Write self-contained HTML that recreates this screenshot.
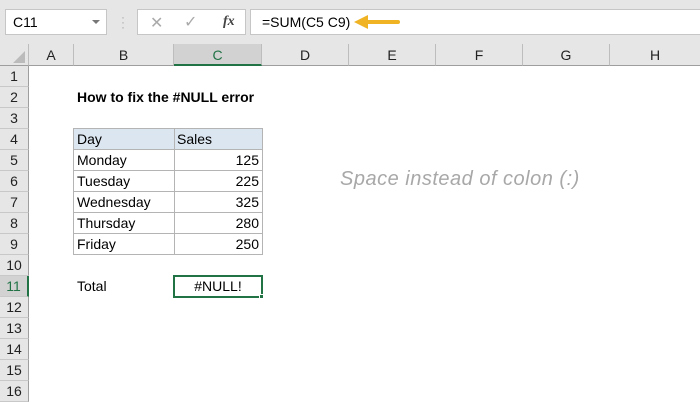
<!DOCTYPE html><html><head><style>
*{margin:0;padding:0;box-sizing:border-box}
body{width:700px;height:400px;overflow:hidden;background:#fff;font-family:"Liberation Sans",sans-serif;position:relative;font-size:14px;color:#000}
.a{position:absolute}
.ch{position:absolute;top:44px;height:22px;border-right:1px solid #bdbdbd;border-bottom:1px solid #9e9e9e;background:#e6e6e6;text-align:center;line-height:22px;font-size:14px;color:#222}
.rh{position:absolute;left:0;width:29px;height:21px;border-bottom:1px solid #c8c8c8;border-right:1px solid #9e9e9e;background:#e6e6e6;text-align:center;line-height:21px;font-size:14px;color:#222}
.c{position:absolute;height:21px;line-height:21px;font-size:14px;padding:0 3px;white-space:nowrap}
</style></head><body>
<div class="a" style="left:0;top:0;width:700px;height:44px;background:#e6e6e6"></div>
<div class="a" style="left:5px;top:9px;width:102px;height:26px;background:#fff;border:1px solid #c6c6c6;line-height:24px;padding-left:7px;font-size:14px">C11</div>
<div class="a" style="left:92px;top:20px;width:0;height:0;border-left:4px solid transparent;border-right:4px solid transparent;border-top:4px solid #777"></div>
<div class="a" style="left:121px;top:15px;color:#aaa;font-size:12px;line-height:5px">·<br>·<br>·</div>
<div class="a" style="left:137px;top:9px;width:109px;height:26px;background:#fff;border:1px solid #c6c6c6"></div>
<div class="a" style="left:150px;top:13px;color:#aaa;font-size:16px">✕</div>
<div class="a" style="left:184px;top:12px;color:#aaa;font-size:16px">✓</div>
<div class="a" style="left:223px;top:14px;color:#444;font-size:14px;font-style:italic;font-family:'Liberation Serif',serif;font-weight:bold">fx</div>
<div class="a" style="left:250px;top:9px;width:450px;height:26px;background:#fff;border:1px solid #c6c6c6;border-right:none;line-height:24px;padding-left:11px;font-size:14px">=SUM(C5 C9)</div>
<svg class="a" style="left:352px;top:12px" width="50" height="20"><path d="M10 10H46" stroke="#f0b323" stroke-width="4" stroke-linecap="round"/><path d="M2 10L16 3V17Z" fill="#f0b323"/></svg>
<div class="ch" style="left:0;width:29px"></div>
<div class="a" style="left:13px;top:51px;width:0;height:0;border-left:12px solid transparent;border-bottom:12px solid #bbb"></div>
<div class="ch" style="left:29px;width:45px">A</div>
<div class="ch" style="left:74px;width:100px">B</div>
<div class="ch" style="left:174px;width:88px;background:#d2d2d2;border-bottom:2px solid #217346;color:#217346">C</div>
<div class="ch" style="left:262px;width:87px">D</div>
<div class="ch" style="left:349px;width:87px">E</div>
<div class="ch" style="left:436px;width:87px">F</div>
<div class="ch" style="left:523px;width:87px">G</div>
<div class="ch" style="left:610px;width:90px;border-right:none">H</div>
<div class="rh" style="top:66px">1</div><div class="rh" style="top:87px">2</div><div class="rh" style="top:108px">3</div><div class="rh" style="top:129px">4</div><div class="rh" style="top:150px">5</div><div class="rh" style="top:171px">6</div><div class="rh" style="top:192px">7</div><div class="rh" style="top:213px">8</div><div class="rh" style="top:234px">9</div><div class="rh" style="top:255px">10</div>
<div class="rh" style="top:276px;background:#d2d2d2;color:#217346;border-right:2px solid #217346">11</div>
<div class="rh" style="top:297px">12</div><div class="rh" style="top:318px">13</div><div class="rh" style="top:339px">14</div><div class="rh" style="top:360px">15</div><div class="rh" style="top:381px">16</div>
<div class="c" style="left:74px;top:87px;font-weight:bold">How to fix the #NULL error</div>
<div class="a" style="left:73px;top:128px;width:190px;height:127px;border:1px solid #b4b4b4"></div>
<div class="a" style="left:74px;top:129px;width:188px;height:21px;background:#dce6f1"></div>
<div class="a" style="left:174px;top:129px;width:1px;height:125px;background:#b4b4b4"></div>
<div class="a" style="left:74px;top:149px;width:188px;height:1px;background:#b4b4b4"></div>
<div class="a" style="left:74px;top:170px;width:188px;height:1px;background:#b4b4b4"></div>
<div class="a" style="left:74px;top:191px;width:188px;height:1px;background:#b4b4b4"></div>
<div class="a" style="left:74px;top:212px;width:188px;height:1px;background:#b4b4b4"></div>
<div class="a" style="left:74px;top:233px;width:188px;height:1px;background:#b4b4b4"></div>
<div class="c" style="left:74px;top:129px">Day</div><div class="c" style="left:174px;top:129px">Sales</div>
<div class="c" style="left:74px;top:150px">Monday</div><div class="c" style="left:174px;top:150px;width:88px;text-align:right">125</div>
<div class="c" style="left:74px;top:171px">Tuesday</div><div class="c" style="left:174px;top:171px;width:88px;text-align:right">225</div>
<div class="c" style="left:74px;top:192px">Wednesday</div><div class="c" style="left:174px;top:192px;width:88px;text-align:right">325</div>
<div class="c" style="left:74px;top:213px">Thursday</div><div class="c" style="left:174px;top:213px;width:88px;text-align:right">280</div>
<div class="c" style="left:74px;top:234px">Friday</div><div class="c" style="left:174px;top:234px;width:88px;text-align:right">250</div>
<div class="c" style="left:74px;top:276px">Total</div>
<div class="a" style="left:173px;top:275px;width:90px;height:23px;border:2px solid #217346;text-align:center;line-height:19px;font-size:14px">#NULL!</div>
<div class="a" style="left:259px;top:294px;width:5px;height:5px;background:#217346;border:1px solid #fff"></div>
<div class="a" style="left:340px;top:168px;font-size:20px;color:#a8a8a8;font-style:italic;letter-spacing:0.5px">Space instead of colon (:)</div>
</body></html>
